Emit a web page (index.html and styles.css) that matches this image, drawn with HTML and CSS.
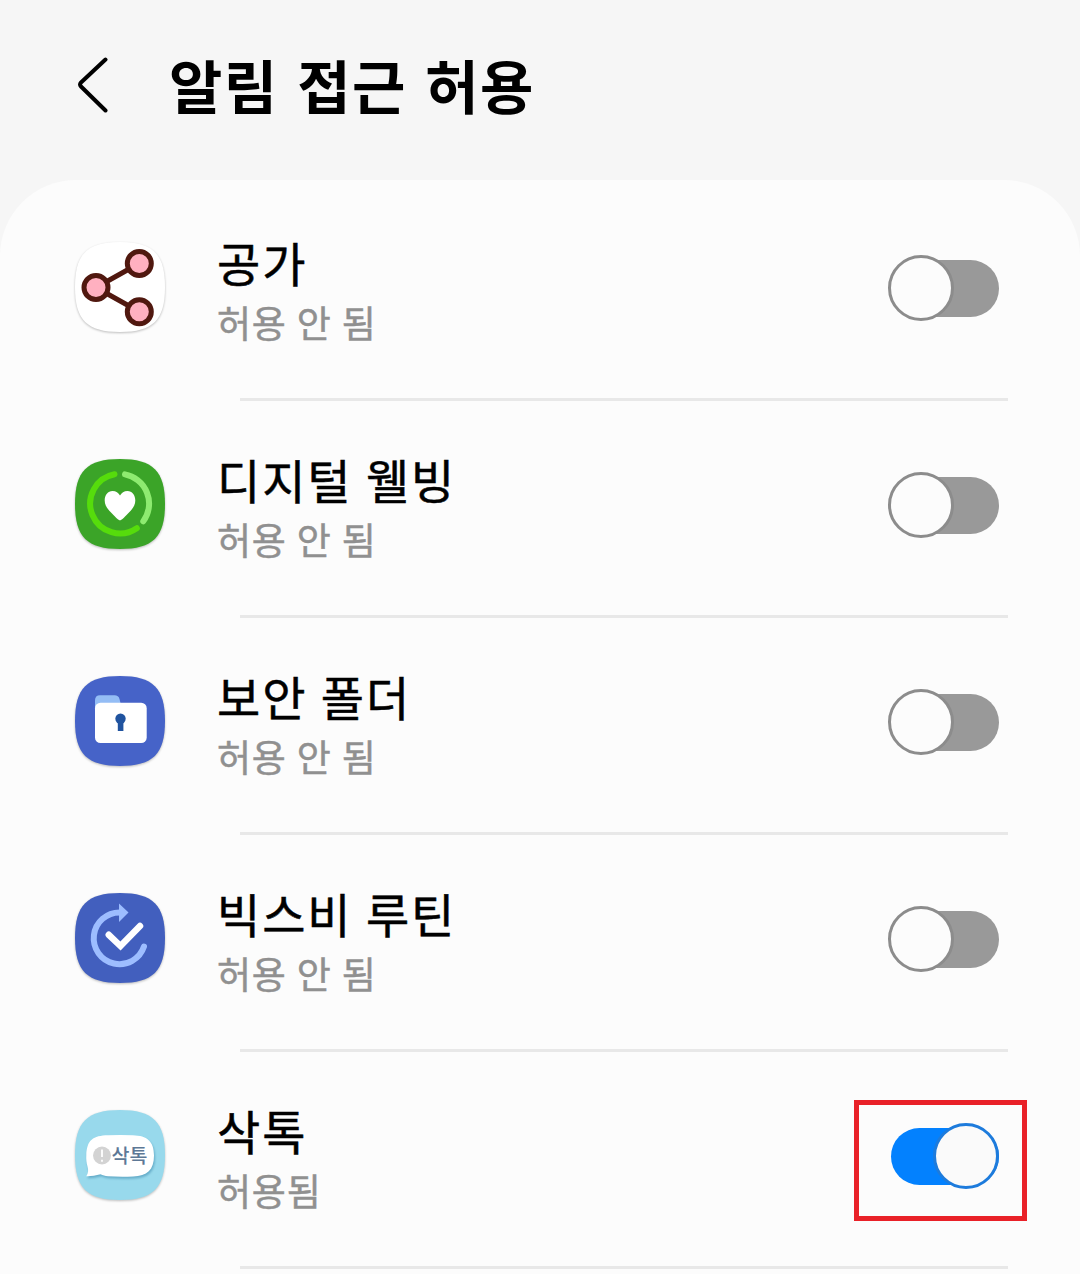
FILE: index.html
```html
<!DOCTYPE html>
<html lang="ko">
  <head>
    <meta charset="UTF-8" />
    <meta name="viewport" content="width=device-width, initial-scale=1.0" />
    <title>알림 접근 허용</title>
    <link rel="stylesheet" href="styles.css">
  </head>
  <body>
    <header class="header">
      <svg class="back" viewBox="0 0 32 56" width="32" height="56">
        <path d="M28.5 2.5 L4 25.5 Q2 27.5 4 29.5 L28.5 53.5" />
      </svg>
      <h1>알림 접근 허용</h1>
    </header>

    <main class="card">
      <div class="item">
        <svg class="icon" viewBox="0 0 90 90">
          <path class="base base-white" d="M45 0C78 0 90 12 90 45S78 90 45 90 0 78 0 45 12 0 45 0Z" />
          <g class="share">
            <path d="M21 45.5 L64 21.5 M21 45.5 L64 69.5" />
            <circle cx="21" cy="45.5" r="12" />
            <circle cx="64.3" cy="21.5" r="12" />
            <circle cx="64.3" cy="69.7" r="12" />
          </g>
        </svg>
        <div class="text">
          <div class="name">공가</div>
          <div class="status">허용 안 됨</div>
        </div>
        <div class="switch"><span class="thumb"></span></div>
      </div>
      <div class="divider"></div>

      <div class="item">
        <svg class="icon" viewBox="0 0 90 90">
          <path class="base base-green" d="M45 0C78 0 90 12 90 45S78 90 45 90 0 78 0 45 12 0 45 0Z" />
          <path class="ring ring-green" d="M39.5 15.3 A29.8 29.8 0 1 0 61.8 69.2" />
          <path class="ring ring-light" d="M50 15.4 A29.8 29.8 0 0 1 68.3 62.3" />
          <path class="white" d="M45 61.3 C43.5 61.3 41 58.5 37 54.5 C32.5 50 29.7 46.5 29.7 41.5 C29.7 36 33 32 37.5 32 C41 32 43.5 34 45 36.5 C46.5 34 49 32 52.5 32 C57 32 60.3 36 60.3 41.5 C60.3 46.5 57.5 50 53 54.5 C49 58.5 46.5 61.3 45 61.3Z" />
        </svg>
        <div class="text">
          <div class="name">디지털 웰빙</div>
          <div class="status">허용 안 됨</div>
        </div>
        <div class="switch"><span class="thumb"></span></div>
      </div>
      <div class="divider"></div>

      <div class="item">
        <svg class="icon" viewBox="0 0 90 90">
          <path class="base base-blue" d="M45 0C78 0 90 12 90 45S78 90 45 90 0 78 0 45 12 0 45 0Z" />
          <path class="folder-tab" d="M20 35 V24.5 Q20 19.3 25 19.3 H39.5 Q43.5 19.3 44.5 23 L45.5 27 V35Z" />
          <rect class="white" x="20" y="26.7" width="51.7" height="40.3" rx="5.5" />
          <circle class="key" cx="45.5" cy="42.7" r="5.2" />
          <rect class="key" x="42.8" y="44" width="5.6" height="11" />
        </svg>
        <div class="text">
          <div class="name">보안 폴더</div>
          <div class="status">허용 안 됨</div>
        </div>
        <div class="switch"><span class="thumb"></span></div>
      </div>
      <div class="divider"></div>

      <div class="item">
        <svg class="icon" viewBox="0 0 90 90">
          <path class="base base-indigo" d="M45 0C78 0 90 12 90 45S78 90 45 90 0 78 0 45 12 0 45 0Z" />
          <path class="loop" d="M45 19.5 A25.8 25.8 0 1 0 69 53.5" />
          <path class="arrow" d="M44 10.5 L53.5 19.5 L44 29Z" />
          <path class="check" d="M33.8 41.8 L45.5 53 L65 33" />
        </svg>
        <div class="text">
          <div class="name">빅스비 루틴</div>
          <div class="status">허용 안 됨</div>
        </div>
        <div class="switch"><span class="thumb"></span></div>
      </div>
      <div class="divider"></div>

      <div class="item">
        <svg class="icon" viewBox="0 0 90 90">
          <path class="base base-sky" d="M45 0C78 0 90 12 90 45S78 90 45 90 0 78 0 45 12 0 45 0Z" />
          <path class="bubble" d="M11.3 66.3 C13.5 62.5 13.5 60 12.5 56.5 C11.5 53 11 49 11.3 45 C11.8 30 18 25.5 33 25.2 Q45 24.7 58 25.2 C72 25.7 79 31 79 45.5 C79 60 72 66 58 66.5 Q45 67 33 66.3 C30 66 28 65.3 25.5 64.2 Q18 66.5 11.3 66.3Z" />
          <circle class="badge" cx="27" cy="45.5" r="9" />
          <path class="mark" d="M27 39.5 V47 M27 49.7 V51.7" />
          <text class="logo" x="36.5" y="52.5">삭톡</text>
        </svg>
        <div class="text">
          <div class="name">삭톡</div>
          <div class="status">허용됨</div>
        </div>
        <div class="switch on"><span class="thumb"></span><span class="highlight"></span></div>
      </div>
      <div class="divider"></div>
    </main>
  </body>
</html>
```
FILE: styles.css
```css
* {
  box-sizing: border-box;
}
body {
  margin: 0;
  background-color: #f6f6f6;
  color: #000;
  font-family: "Noto Sans CJK KR", sans-serif;
}
.header {
  display: flex;
  align-items: center;
  height: 180px;
  padding: 0 0 11px 77px;
}
.back {
  fill: none;
  stroke: #000;
  stroke-width: 4;
  stroke-linecap: round;
}
h1 {
  margin: 0 0 2px 60px;
  font-size: 58px;
  font-weight: 700;
  line-height: 86px;
  letter-spacing: 1.4px;
  word-spacing: 1px;
}
.card {
  height: 1094px;
  padding-top: 4px;
  border-radius: 76px 76px 0 0;
  background-color: #fcfcfc;
}
.item {
  display: flex;
  align-items: center;
  height: 214px;
  padding: 0 81px 6px 75px;
}
.divider {
  height: 3px;
  margin: 0 72px 0 240px;
  background-color: #e8e8e8;
}
.icon {
  width: 90px;
  height: 90px;
  margin-bottom: 2px;
  overflow: visible;
}
.text {
  flex: 1;
  margin: 4px 0 0 52px;
}
.name {
  font-size: 47px;
  line-height: 64px;
  letter-spacing: 1.9px;
  word-spacing: -1.5px;
  -webkit-text-stroke: 0.5px;
}
.status {
  color: #909090;
  font-size: 37px;
  line-height: 56px;
  letter-spacing: 0.8px;
  word-spacing: -1px;
  -webkit-text-stroke: 0.5px;
}

/* switch */
.switch {
  position: relative;
  display: flex;
  align-items: center;
  width: 111px;
  height: 66px;
}
.switch::before {
  content: "";
  width: 108px;
  height: 57px;
  margin-left: 3px;
  border-radius: 29px;
  background-color: #999;
}
.thumb {
  position: absolute;
  top: 0;
  left: 0;
  width: 66px;
  height: 66px;
  border: 3px solid #8c8c8c;
  border-radius: 50%;
  background-color: #fcfcfc;
}
.on::before {
  background-color: #0381fe;
}
.on .thumb {
  left: 45px;
  border-color: #1d7bdc;
  background-color: #fafafa;
}
.highlight {
  position: absolute;
  top: -23px;
  left: -34px;
  width: 173px;
  height: 121px;
  border: 5px solid #e92128;
}

/* app icons */
.base {
  filter: drop-shadow(0 1px 1px rgba(0, 0, 0, 0.25));
}
.base-white {
  fill: #fff;
}
.base-green {
  fill: #3ba428;
}
.base-blue {
  fill: #4663c8;
}
.base-indigo {
  fill: #425fbe;
}
.base-sky {
  fill: #98d9ec;
}
.white {
  fill: #fff;
}
.share {
  fill: #ffb0c0;
  stroke: #50180f;
  stroke-width: 5;
}
.ring {
  fill: none;
  stroke-width: 6;
  stroke-linecap: round;
}
.ring-green {
  stroke: #56dc0c;
}
.ring-light {
  stroke: #8eeb70;
}
.folder-tab {
  fill: #94bdf5;
}
.key {
  fill: #20539f;
}
.loop {
  fill: none;
  stroke: #9dbdff;
  stroke-width: 6;
  stroke-linecap: round;
}
.arrow {
  fill: #9dbdff;
}
.check {
  fill: none;
  stroke: #fff;
  stroke-width: 6.5;
  stroke-linecap: round;
}
.bubble {
  fill: #fff;
  filter: drop-shadow(1px 2px 1px rgba(40, 120, 160, 0.45));
}
.badge {
  fill: #d3d3d3;
}
.mark {
  stroke: #fff;
  stroke-width: 1.8;
}
.logo {
  fill: #5d7896;
  font-size: 19.5px;
  font-weight: 500;
}
```
